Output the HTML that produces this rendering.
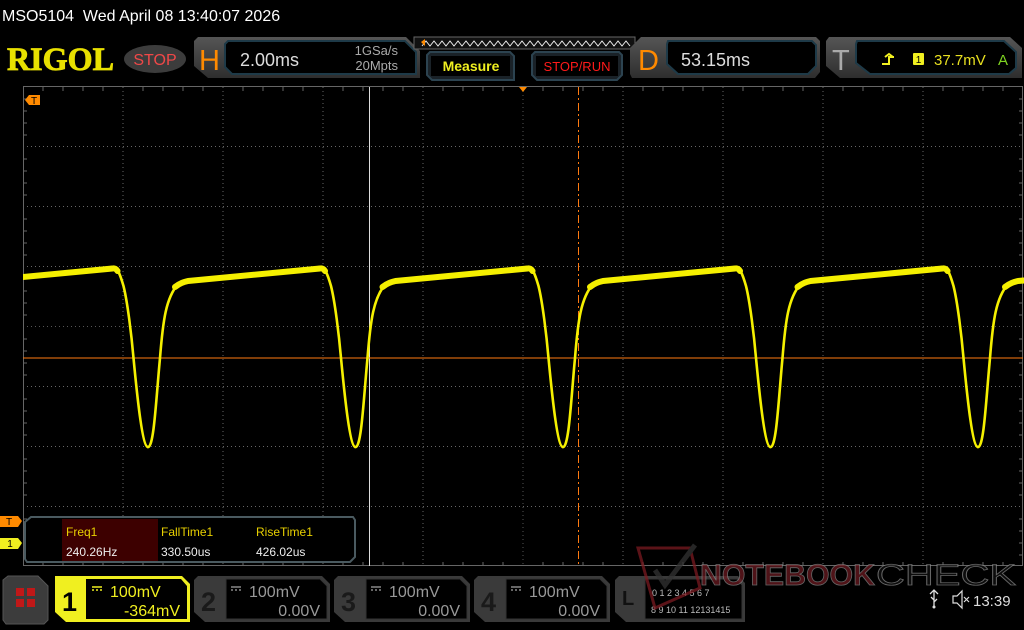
<!DOCTYPE html>
<html><head><meta charset="utf-8"><style>
html,body{margin:0;padding:0;background:#000;width:1024px;height:630px;overflow:hidden}
svg{display:block}
text{font-family:"Liberation Sans","DejaVu Sans",sans-serif}
</style></head><body>
<svg width="1024" height="630" viewBox="0 0 1024 630" xmlns="http://www.w3.org/2000/svg">
<defs>
<linearGradient id="gp" x1="0" y1="0" x2="0" y2="1"><stop offset="0" stop-color="#555"/><stop offset="1" stop-color="#2e2e2e"/></linearGradient>
<clipPath id="plot"><rect x="23" y="87" width="1001" height="479"/></clipPath>
<path id="cyc" d="M0,447 C6,447 8,400 12,358 C15,320 18,298 30,284 L40,280 L172,267 C176,266 179,272 183,286 C187,302 191,335 193,358 C197,400 202,447 207.5,447"/>
<path id="band" d="M27,286 C32,282 36,281 40,280 L172,267.5 C174,267 176,268 177,270"/>
</defs>
<rect width="1024" height="630" fill="#000"/>
<text x="2" y="21" fill="#fff" font-size="16" style="white-space:pre">MSO5104  Wed April 08 13:40:07 2026</text>
<!-- RIGOL -->
<text x="7" y="70" fill="#e8e000" font-size="33" font-weight="bold" textLength="107" lengthAdjust="spacingAndGlyphs" style="font-family:'Liberation Serif',serif" stroke="#e8e000" stroke-width="0.8">RIGOL</text>
<ellipse cx="155" cy="59" rx="31" ry="14" fill="#3c3c3c"/>
<text x="155" y="65" fill="#f04848" font-size="16" text-anchor="middle">STOP</text>
<!-- H panel -->
<path d="M198,37 L406,37 L420,51 L420,78 L208,78 L194,66 L194,41 Z" fill="url(#gp)"/>
<path d="M228,41 L405,41 L416,52 L416,74 L232,74 L225,67 L225,44 Z" fill="#000" stroke="#1e3a48" stroke-width="2"/>
<text x="199" y="70" fill="#ff8a00" font-size="29">H</text>
<text x="240" y="66" fill="#ddd" font-size="18">2.00ms</text>
<text x="398" y="55" fill="#aaa" font-size="13" text-anchor="end">1GSa/s</text>
<text x="398" y="70" fill="#aaa" font-size="13" text-anchor="end">20Mpts</text>
<!-- trigger position bar -->
<path d="M414,37 L635,37 L635,45 L631,49 L414,49 Z" fill="#111" stroke="#666" stroke-width="1"/>
<path d="M422,46 L426,41 L430,46 L434,41 L438,46 L442,41 L446,46 L450,41 L454,46 L458,41 L462,46 L466,41 L470,46 L474,41 L478,46 L482,41 L486,46 L490,41 L494,46 L498,41 L502,46 L506,41 L510,46 L514,41 L518,46 L522,41 L526,46 L530,41 L534,46 L538,41 L542,46 L546,41 L550,46 L554,41 L558,46 L562,41 L566,46 L570,41 L574,46 L578,41 L582,46 L586,41 L590,46 L594,41 L598,46 L602,41 L606,46 L610,41 L614,46 L618,41 L622,46 L626,41 L630,46" fill="none" stroke="#eee" stroke-width="1"/>
<path d="M421,42 L425,39 L425,46 Z" fill="#ff8a00"/>
<!-- Measure -->
<path d="M430,52 L510,52 L514,56 L514,80 L432,80 L427,75 L427,55 Z" fill="#1a2228" stroke="#2c4350" stroke-width="2"/>
<rect x="431" y="56" width="79" height="20" fill="#000"/>
<text x="471" y="71" fill="#f0ef20" font-size="14" font-weight="bold" text-anchor="middle">Measure</text>
<path d="M535,52 L619,52 L622,55 L622,75 L617,80 L537,80 L532,75 L532,55 Z" fill="#1a2228" stroke="#2c4350" stroke-width="2"/>
<rect x="536" y="56" width="82" height="20" fill="#000"/>
<text x="577" y="71" fill="#ff1a1a" font-size="13" text-anchor="middle">STOP/RUN</text>
<!-- D panel -->
<path d="M641,37 L816,37 L820,41 L820,72 L815,78 L632,78 L630,74 L630,48 Z" fill="url(#gp)"/>
<path d="M668,41 L812,41 L816,45 L816,66 L808,74 L678,74 L667,64 L667,44 Z" fill="#000" stroke="#1e3a48" stroke-width="2"/>
<text x="638" y="70" fill="#ff8a00" font-size="29">D</text>
<text x="681" y="66" fill="#ddd" font-size="18">53.15ms</text>
<!-- T panel -->
<path d="M829,37 L1010,37 L1022,48 L1022,78 L840,78 L826,66 L826,41 Z" fill="url(#gp)"/>
<path d="M857,41 L1004,41 L1016,52 L1016,68 L1009,74 L870,74 L856,63 L856,44 Z" fill="#000" stroke="#1e3a48" stroke-width="2"/>
<text x="832" y="70" fill="#aaa" font-size="29">T</text>
<path d="M882,64 L889,64 L889,57 L894,57 M885,57 L889,54 L893,57" fill="none" stroke="#f0ef20" stroke-width="2"/>
<rect x="913" y="53" width="11" height="12" rx="1" fill="#f0ef20"/>
<text x="918.5" y="63" fill="#000" font-size="10" text-anchor="middle">1</text>
<text x="934" y="65" fill="#e8e020" font-size="15">37.7mV</text>
<text x="998" y="65" fill="#7ed321" font-size="15">A</text>
<!-- plot -->
<g stroke="#666" stroke-width="1" stroke-dasharray="1 3" fill="none">
<path d="M123,87V566M223,87V566M323,87V566M423,87V566M623,87V566M723,87V566M823,87V566M923,87V566"/>
<path d="M23,146.5H1023M23,206.5H1023M23,266.5H1023M23,386.5H1023M23,446.5H1023M23,506.5H1023"/>
</g>
<path d="M523,87V566M23,326.5H1023" stroke="#555" stroke-width="1" stroke-dasharray="1 3"/>
<rect x="23.5" y="86.5" width="999" height="479" fill="none" stroke="#666" stroke-width="1"/>
<g stroke="#666" stroke-width="1">
<path d="M43,87v4M63,87v4M83,87v4M103,87v4M143,87v4M163,87v4M183,87v4M203,87v4M243,87v4M263,87v4M283,87v4M303,87v4M343,87v4M363,87v4M383,87v4M403,87v4M443,87v4M463,87v4M483,87v4M503,87v4M543,87v4M563,87v4M583,87v4M603,87v4M643,87v4M663,87v4M683,87v4M703,87v4M743,87v4M763,87v4M783,87v4M803,87v4M843,87v4M863,87v4M883,87v4M903,87v4M943,87v4M963,87v4M983,87v4M1003,87v4"/>
<path d="M43,566v-4M63,566v-4M83,566v-4M103,566v-4M143,566v-4M163,566v-4M183,566v-4M203,566v-4M243,566v-4M263,566v-4M283,566v-4M303,566v-4M343,566v-4M363,566v-4M383,566v-4M403,566v-4M443,566v-4M463,566v-4M483,566v-4M503,566v-4M543,566v-4M563,566v-4M583,566v-4M603,566v-4M643,566v-4M663,566v-4M683,566v-4M703,566v-4M743,566v-4M763,566v-4M783,566v-4M803,566v-4M843,566v-4M863,566v-4M883,566v-4M903,566v-4M943,566v-4M963,566v-4M983,566v-4M1003,566v-4"/>
<path d="M23,99h4M23,111h4M23,123h4M23,135h4M23,159h4M23,171h4M23,183h4M23,195h4M23,219h4M23,231h4M23,243h4M23,255h4M23,279h4M23,291h4M23,303h4M23,315h4M23,339h4M23,351h4M23,363h4M23,375h4M23,399h4M23,411h4M23,423h4M23,435h4M23,459h4M23,471h4M23,483h4M23,495h4M23,519h4M23,531h4M23,543h4M23,555h4"/>
<path d="M1023,99h-4M1023,111h-4M1023,123h-4M1023,135h-4M1023,159h-4M1023,171h-4M1023,183h-4M1023,195h-4M1023,219h-4M1023,231h-4M1023,243h-4M1023,255h-4M1023,279h-4M1023,291h-4M1023,303h-4M1023,315h-4M1023,339h-4M1023,351h-4M1023,363h-4M1023,375h-4M1023,399h-4M1023,411h-4M1023,423h-4M1023,435h-4M1023,459h-4M1023,471h-4M1023,483h-4M1023,495h-4M1023,519h-4M1023,531h-4M1023,543h-4M1023,555h-4"/>
</g>
<!-- cursors -->
<path d="M369.5,87V566" stroke="#ddd" stroke-width="1"/>
<path d="M578.5,87V566" stroke="#ff7a10" stroke-width="1" stroke-dasharray="8 3 2 3"/>
<path d="M23,358H1023" stroke="#ff7a10" stroke-width="1"/>
<path d="M519,87 L527,87 L523,92 Z" fill="#ff8a00"/>
<!-- waveform -->
<g clip-path="url(#plot)" fill="none" stroke="#f5f000" stroke-linejoin="round" stroke-linecap="round">
<g stroke-width="2.6">
<use href="#cyc" transform="translate(-59.5,0)"/>
<use href="#cyc" transform="translate(148,0)"/>
<use href="#cyc" transform="translate(355.5,0)"/>
<use href="#cyc" transform="translate(563,0)"/>
<use href="#cyc" transform="translate(770.5,0)"/>
<use href="#cyc" transform="translate(978,0)"/>
</g>
<g stroke-width="6">
<use href="#band" transform="translate(-59.5,1)"/>
<use href="#band" transform="translate(148,1)"/>
<use href="#band" transform="translate(355.5,1)"/>
<use href="#band" transform="translate(563,1)"/>
<use href="#band" transform="translate(770.5,1)"/>
<use href="#band" transform="translate(978,1)"/>
</g>
</g>
<!-- T marker -->
<path d="M25,100 L29,95 L40,95 L40,105 L29,105 Z" fill="#ff8a00"/>
<text x="34" y="104" fill="#000" font-size="10" text-anchor="middle">T</text>
<!-- left markers -->
<path d="M0,516 L18,516 L22,521 L18,527 L0,527 Z" fill="#ff8a00"/>
<text x="9" y="525" fill="#000" font-size="10" text-anchor="middle">T</text>
<path d="M0,538 L18,538 L22,543 L18,549 L0,549 Z" fill="#f0ef20"/>
<text x="10" y="547" fill="#000" font-size="10" text-anchor="middle">1</text>
<!-- measure box -->
<path d="M31,517 L353,517 L355,520 L355,557 L350,562 L27,562 L25,559 L25,522 Z" fill="#000" stroke="#4a5a60" stroke-width="2"/>
<rect x="62" y="519" width="96" height="42" fill="#3d0000"/>
<text x="66" y="536" fill="#e8d000" font-size="12">Freq1</text>
<text x="66" y="556" fill="#eee" font-size="12">240.26Hz</text>
<text x="161" y="536" fill="#e8d000" font-size="12">FallTime1</text>
<text x="161" y="556" fill="#eee" font-size="12">330.50us</text>
<text x="256" y="536" fill="#e8d000" font-size="12">RiseTime1</text>
<text x="256" y="556" fill="#eee" font-size="12">426.02us</text>
<!-- bottom bar -->
<path d="M8,576 L38,576 L48,586 L48,620 L44,624 L6,624 L3,620 L3,580 Z" fill="#3c3c3c" stroke="#555"/>
<rect x="16" y="588" width="8" height="8" fill="#c01818"/><rect x="27" y="588" width="8" height="8" fill="#c01818"/>
<rect x="16" y="599" width="8" height="8" fill="#c01818"/><rect x="27" y="599" width="8" height="8" fill="#c01818"/>
<!-- ch1 -->
<path d="M55,576 L182,576 L190,584 L190,622 L66,622 L55,612 Z" fill="#f0ef20"/>
<path d="M86,579 L181,579 L187,586 L187,619 L86,619 Z" fill="#000"/>
<text x="62" y="611" fill="#000" font-size="27" font-weight="bold">1</text>
<path d="M92,587h10M92,590h2m2,0h2m2,0h2" stroke="#f0ef20" stroke-width="1.5"/>
<text x="110" y="597" fill="#f0ef20" font-size="16">100mV</text>
<text x="180" y="616" fill="#f0ef20" font-size="16" text-anchor="end">-364mV</text>
<!-- ch2..4 -->
<g>
<path d="M198,576 L322,576 L330,584 L330,622 L205,622 L194,612 L194,580 Z" fill="#3a3a3a"/>
<path d="M226,579 L320,579 L327,586 L327,619 L226,619 Z" fill="#000" stroke="#333"/>
<text x="201" y="611" fill="#1a1a1a" font-size="27" font-weight="bold">2</text>
<path d="M231,587h10M231,590h2m2,0h2m2,0h2" stroke="#888" stroke-width="1.5"/>
<text x="249" y="597" fill="#999" font-size="16">100mV</text>
<text x="320" y="616" fill="#999" font-size="16" text-anchor="end">0.00V</text>
</g>
<g transform="translate(140,0)">
<path d="M198,576 L322,576 L330,584 L330,622 L205,622 L194,612 L194,580 Z" fill="#3a3a3a"/>
<path d="M226,579 L320,579 L327,586 L327,619 L226,619 Z" fill="#000" stroke="#333"/>
<text x="201" y="611" fill="#1a1a1a" font-size="27" font-weight="bold">3</text>
<path d="M231,587h10M231,590h2m2,0h2m2,0h2" stroke="#888" stroke-width="1.5"/>
<text x="249" y="597" fill="#999" font-size="16">100mV</text>
<text x="320" y="616" fill="#999" font-size="16" text-anchor="end">0.00V</text>
</g>
<g transform="translate(280,0)">
<path d="M198,576 L322,576 L330,584 L330,622 L205,622 L194,612 L194,580 Z" fill="#3a3a3a"/>
<path d="M226,579 L320,579 L327,586 L327,619 L226,619 Z" fill="#000" stroke="#333"/>
<text x="201" y="611" fill="#1a1a1a" font-size="27" font-weight="bold">4</text>
<path d="M231,587h10M231,590h2m2,0h2m2,0h2" stroke="#888" stroke-width="1.5"/>
<text x="249" y="597" fill="#999" font-size="16">100mV</text>
<text x="320" y="616" fill="#999" font-size="16" text-anchor="end">0.00V</text>
</g>
<!-- L -->
<path d="M619,576 L738,576 L745,583 L745,622 L626,622 L615,612 L615,580 Z" fill="#3a3a3a"/>
<path d="M645,579 L737,579 L742,585 L742,619 L645,619 Z" fill="#000" stroke="#333"/>
<text x="622" y="605" fill="#111" font-size="20" font-weight="bold">L</text>
<text x="652" y="596" fill="#bbb" font-size="9">0 1 2 3 4 5 6 7</text>
<text x="651" y="613" fill="#bbb" font-size="9">8 9 10 11 12131415</text>
<!-- watermark -->
<g opacity="0.75">
<path d="M638,548 L690,548 L700,588 L655,608 Z" fill="none" stroke="#7a1a20" stroke-width="3"/>
<path d="M655,570 L665,585 L695,545" fill="none" stroke="#333" stroke-width="5"/>
<text x="700" y="585" fill="#6a1a20" stroke="#888" stroke-width="0.8" font-size="30" font-weight="bold" textLength="175" lengthAdjust="spacingAndGlyphs">NOTEBOOK</text>
<text x="876" y="585" fill="#111" stroke="#888" stroke-width="0.8" font-size="30" textLength="140" lengthAdjust="spacingAndGlyphs">CHECK</text>
</g>
<!-- status icons -->
<path d="M934,590V607M930,594l4,-4 4,4M934,600l-3,-3M934,602l3,-3" stroke="#ddd" stroke-width="1.3" fill="none"/>
<circle cx="934" cy="607" r="1.5" fill="#ddd"/>
<path d="M953,596h4l5,-5v17l-5,-5h-4z" fill="none" stroke="#ddd" stroke-width="1.2"/>
<path d="M964,597l5,5M969,597l-5,5" stroke="#ddd" stroke-width="1.2"/>
<text x="973" y="606" fill="#ddd" font-size="15">13:39</text>
</svg>
</body></html>
